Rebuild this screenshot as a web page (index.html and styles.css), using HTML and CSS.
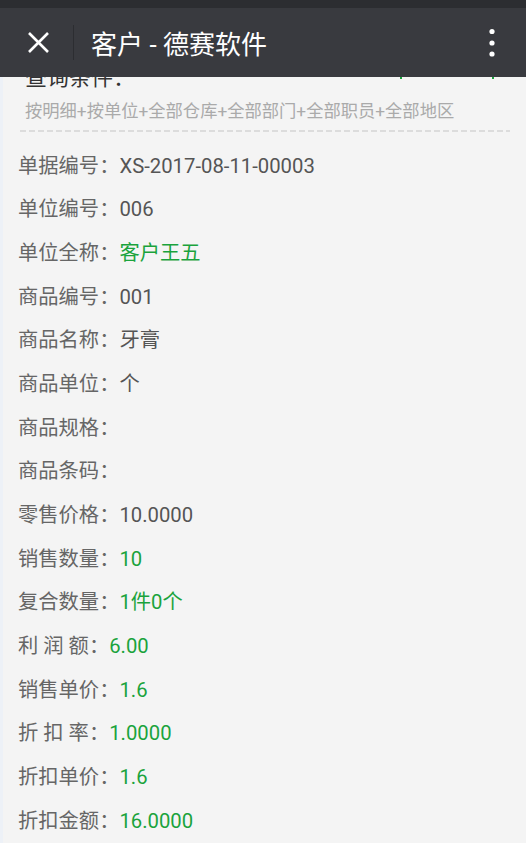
FILE: index.html
```html
<!DOCTYPE html>
<html>
<head>
    <meta charset="utf-8">
    <title>客户 - 德赛软件</title>
    <link rel="stylesheet" href="styles.css">
</head>
<body>
    <div class="header">
        <div class="statusbar"></div>
        <div class="toolbar">
            <svg class="close" width="23" height="23" viewBox="0 0 23 23">
                <path d="M2 2 L21 21 M21 2 L2 21" stroke="#fff" stroke-width="2.6" fill="none"/>
            </svg>
            <span class="divider"></span>
            <span class="title">客户 - 德赛软件</span>
            <svg class="more" width="8" height="30" viewBox="0 0 8 30">
                <circle cx="4" cy="3.5" r="2.6" fill="#fff"/>
                <circle cx="4" cy="15" r="2.6" fill="#fff"/>
                <circle cx="4" cy="26" r="2.6" fill="#fff"/>
            </svg>
        </div>
    </div>

    <div class="page">
        <div class="query">
            <div class="query-head">
                <span class="query-title">查询条件：</span>
                <span class="query-edit"></span>
            </div>
            <div class="query-text">按明细+按单位+全部仓库+全部部门+全部职员+全部地区</div>
        </div>
        <div class="dashed"></div>

        <div class="rows">
            <div class="row"><span class="label">单据编号：</span><span class="value">XS-2017-08-11-00003</span></div>
            <div class="row"><span class="label">单位编号：</span><span class="value">006</span></div>
            <div class="row"><span class="label">单位全称：</span><span class="value green">客户王五</span></div>
            <div class="row"><span class="label">商品编号：</span><span class="value">001</span></div>
            <div class="row"><span class="label">商品名称：</span><span class="value">牙膏</span></div>
            <div class="row"><span class="label">商品单位：</span><span class="value">个</span></div>
            <div class="row"><span class="label">商品规格：</span><span class="value"></span></div>
            <div class="row"><span class="label">商品条码：</span><span class="value"></span></div>
            <div class="row"><span class="label">零售价格：</span><span class="value">10.0000</span></div>
            <div class="row"><span class="label">销售数量：</span><span class="value green">10</span></div>
            <div class="row"><span class="label">复合数量：</span><span class="value green">1件0个</span></div>
            <div class="row"><span class="label">利 润 额：</span><span class="value green">6.00</span></div>
            <div class="row"><span class="label">销售单价：</span><span class="value green">1.6</span></div>
            <div class="row"><span class="label">折 扣 率：</span><span class="value green">1.0000</span></div>
            <div class="row"><span class="label">折扣单价：</span><span class="value green">1.6</span></div>
            <div class="row"><span class="label">折扣金额：</span><span class="value green">16.0000</span></div>
        </div>
    </div>
</body>
</html>
```

FILE: styles.css
```css
body {
    margin: 0;
    background-color: #f4f4f4;
    font-family: Roboto, "Noto Sans CJK SC", sans-serif;
    overflow: hidden;
}

.header {
    position: fixed;
    top: 0;
    left: 0;
    right: 0;
    z-index: 10;
}

.statusbar {
    height: 8px;
    background-color: #2c2d31;
}

.toolbar {
    display: flex;
    align-items: center;
    height: 69px;
    padding-left: 27px;
    background-color: #393a3f;
}

.close {
    display: block;
}

.divider {
    width: 1px;
    height: 35px;
    margin-left: 23px;
    background-color: #2c2d31;
}

.title {
    flex: 1;
    margin-left: 17px;
    font-size: 26px;
    color: #ffffff;
}

.more {
    display: block;
    margin-right: 30px;
}

.page {
    box-sizing: border-box;
    height: 100vh;
    padding: 63px 16px 0 15px;
    border-left: 3px solid #edf1f7;
}

.query {
    padding: 0 7px;
}

.query-head {
    display: flex;
    justify-content: space-between;
    height: 30px;
}

.query-title {
    font-size: 22px;
    line-height: 30px;
    color: #333;
}

.query-edit {
    width: 90px;
    height: 16px;
    margin-right: 9px;
    border-left: 2px solid #1aa33c;
    border-right: 2px solid #1aa33c;
}

.query-text {
    margin-top: 5px;
    font-size: 17.3px;
    line-height: 26px;
    color: #aaaaaa;
}

.dashed {
    height: 2px;
    margin: 6px 0 0 2px;
    background-image: linear-gradient(to right, #dcdcdc 6px, transparent 6px);
    background-size: 9px 2px;
}

.rows {
    margin-top: 12.5px;
}

.row {
    height: 43.7px;
    line-height: 43.7px;
    font-size: 20.3px;
    white-space: nowrap;
}

.label {
    color: #666666;
}

.value {
    color: #555555;
}

.value.green {
    color: #1aa33c;
}
```
